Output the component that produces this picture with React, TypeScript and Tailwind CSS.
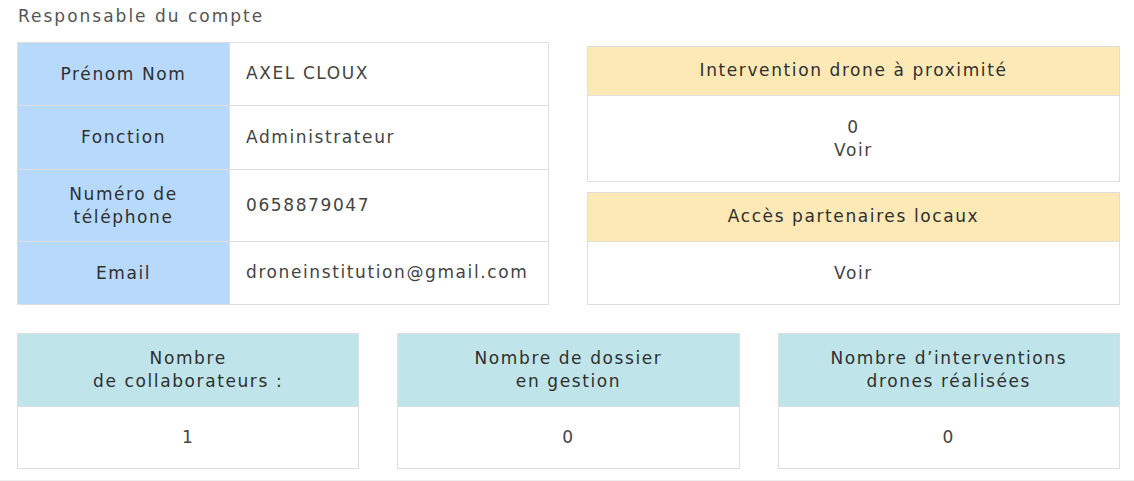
import React from "react";

const font = { fontFamily: "'DejaVu Sans', 'Noto Sans', sans-serif" };

function InfoRow({ label, value, h, last }: { label: React.ReactNode; value: string; h: string; last?: boolean }) {
  return (
    <div className={`flex ${h} ${last ? "" : "border-b border-[#dedede]"}`}>
      <div className="w-[212px] shrink-0 bg-[#b7d9fc] flex items-center justify-center text-center text-[#2f2f2f] leading-[23px] border-r border-[#dedede]">
        {label}
      </div>
      <div className="flex-1 flex items-center pl-[16px] text-[#444]">{value}</div>
    </div>
  );
}

function SideCard({ title, children, bodyH }: { title: string; children: React.ReactNode; bodyH: string }) {
  return (
    <div className="border border-[#dedede]">
      <div className="h-[49px] bg-[#fde9b5] flex items-center justify-center text-[#2f2f2f] border-b border-[#e4e0d6]">{title}</div>
      <div className={`${bodyH} flex flex-col items-center justify-center text-[#444] leading-[23px]`}>{children}</div>
    </div>
  );
}

function StatCard({ title, value }: { title: React.ReactNode; value: string }) {
  return (
    <div className="border border-[#dedede]">
      <div className="h-[72px] bg-[#bfe4ea] flex items-center justify-center text-center text-[#2f2f2f] leading-[23px]">{title}</div>
      <div className="h-[62px] flex items-center justify-center text-[#444] border-t border-[#dedede]">{value}</div>
    </div>
  );
}

export default function App() {
  return (
    <div className="w-[1134px] h-[481px] bg-white border-b border-[#eeeeee] text-[17px] tracking-[1.6px]" style={font}>
      <div className="pl-[18px] pt-[4px] h-[42px] text-[#555] text-[17px] tracking-[2px]">Responsable du compte</div>
      <div className="flex pl-[17px] pr-[14px] gap-[38px]">
        <div className="w-[532px] border border-[#dedede]">
          <InfoRow label="Prénom Nom" value="AXEL CLOUX" h="h-[63px]" />
          <InfoRow label="Fonction" value="Administrateur" h="h-[64px]" />
          <InfoRow label={<span>Numéro de<br />téléphone</span>} value="0658879047" h="h-[72px]" />
          <InfoRow label="Email" value="droneinstitution@gmail.com" h="h-[62px]" last />
        </div>
        <div className="flex-1 flex flex-col gap-[10px] pt-[4px]">
          <SideCard title="Intervention drone à proximité" bodyH="h-[85px]">
            <span>0</span>
            <span>Voir</span>
          </SideCard>
          <SideCard title="Accès partenaires locaux" bodyH="h-[62px]">
            <span>Voir</span>
          </SideCard>
        </div>
      </div>
      <div className="grid grid-cols-3 gap-[38px] pl-[17px] pr-[14px] mt-[28px]">
        <StatCard title={<span>Nombre<br />de collaborateurs :</span>} value="1" />
        <StatCard title={<span>Nombre de dossier<br />en gestion</span>} value="0" />
        <StatCard title={<span>Nombre d’interventions<br />drones réalisées</span>} value="0" />
      </div>
    </div>
  );
}
